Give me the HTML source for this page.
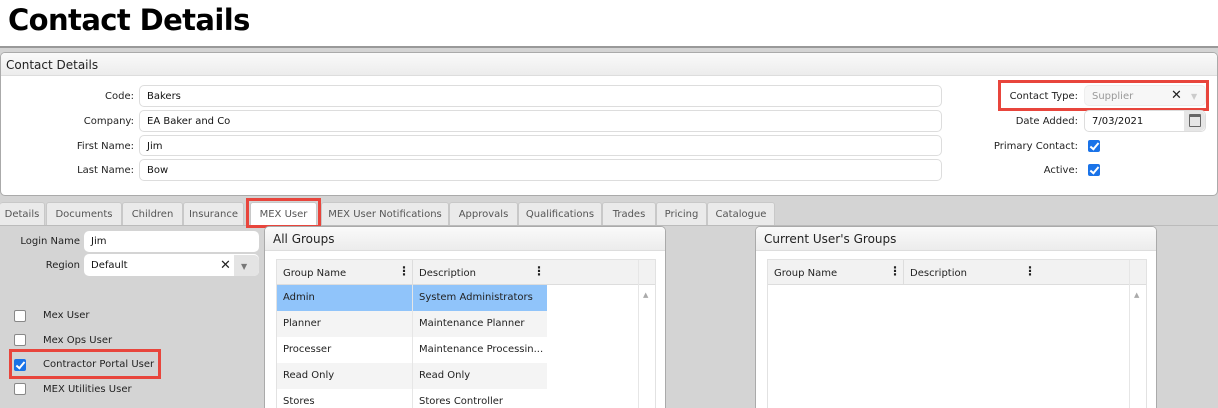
<!DOCTYPE html>
<html><head><style>
*{box-sizing:border-box;margin:0;padding:0}
html,body{width:1218px;height:408px;overflow:hidden}
body{background:#fff;font-family:"DejaVu Sans","Liberation Sans",sans-serif;font-size:10px;color:#222;position:relative}
.a{position:absolute}
.lbl{position:absolute;text-align:right;font-size:10px;color:#222}
.inp{position:absolute;background:#fff;border:1px solid #ddd;border-radius:5px;font-size:10px;padding-left:7px;line-height:21px;color:#111}
.tab{position:absolute;top:202px;height:23px;line-height:23px;background:#eaeaea;border:1px solid #c8c8c8;border-bottom:none;font-size:10px;color:#555;text-align:center;border-radius:3px 3px 0 0}
.cb{position:absolute;width:12px;height:12px;border:1px solid #888;border-radius:2px;background:#fff}
.cbc{position:absolute;width:12px;height:12px;border-radius:2px;background:#1a73e8}
.cbc:after{content:"";position:absolute;left:4px;top:1px;width:3px;height:7px;border:solid #fff;border-width:0 2px 2px 0;transform:rotate(40deg)}
.red{position:absolute;border:3px solid #e8453c}
.panel{position:absolute;background:#fff;border:1px solid #aaa;border-radius:5px 5px 0 0;overflow:hidden}
.ph{height:24px;background:linear-gradient(#fafafa,#ececec);border-bottom:1px solid #ddd;font-size:12px;line-height:24px;padding-left:8px;color:#222}
.row{position:absolute;height:26px;line-height:26px;font-size:10px;padding-left:6px}
</style></head><body>
<div class="a" style="left:8px;top:3px;font-family:'DejaVu Sans',sans-serif;font-weight:bold;font-size:29px;letter-spacing:-0.6px;color:#000">Contact Details</div>
<div class="a" style="left:0;top:46px;width:1218px;height:2px;background:#999"></div>
<div class="a" style="left:0;top:48px;width:1218px;height:360px;background:#d4d4d4"></div>
<div class="panel" style="left:0;top:52px;width:1218px;height:144px;border-radius:5px">
<div class="ph" style="height:23px;line-height:24px;padding-left:5px">Contact Details</div></div>
<div class="lbl" style="left:0;width:134px;top:91px">Code:</div>
<div class="lbl" style="left:0;width:134px;top:116px">Company:</div>
<div class="lbl" style="left:0;width:134px;top:141px">First Name:</div>
<div class="lbl" style="left:0;width:134px;top:165px">Last Name:</div>
<div class="inp" style="left:139px;top:85px;width:803px;height:22px">Bakers</div>
<div class="inp" style="left:139px;top:110px;width:803px;height:22px">EA Baker and Co</div>
<div class="inp" style="left:139px;top:135px;width:803px;height:21px">Jim</div>
<div class="inp" style="left:139px;top:159px;width:803px;height:22px">Bow</div>
<div class="lbl" style="left:900px;width:178px;top:91px">Contact Type:</div>
<div class="inp" style="left:1084px;top:85px;width:122px;height:21px;background:#f7f7f7;border-color:#eee;color:#999">Supplier</div>
<div class="a" style="left:1171px;top:88px;font-size:13px;font-weight:bold;color:#222">✕</div>
<div class="a" style="left:1191px;top:92px;font-size:8px;color:#ccc">▼</div>
<div class="red" style="left:998px;top:80px;width:211px;height:31px"></div>
<div class="lbl" style="left:900px;width:178px;top:116px">Date Added:</div>
<div class="inp" style="left:1084px;top:110px;width:122px;height:22px">7/03/2021</div>
<div class="a" style="left:1184px;top:111px;width:21px;height:20px;background:#e6e6e6;border-radius:0 5px 5px 0"></div>
<div class="a" style="left:1189px;top:114px;width:12px;height:13px;border:1.5px solid #666;border-top-width:3px;border-radius:1px"></div>
<div class="lbl" style="left:900px;width:178px;top:141px">Primary Contact:</div>
<div class="cbc" style="left:1088px;top:140px"></div>
<div class="lbl" style="left:900px;width:178px;top:165px">Active:</div>
<div class="cbc" style="left:1088px;top:164px"></div>

<div class="a" style="left:0;top:225px;width:1218px;height:1px;background:#bbb"></div>
<div class="tab" style="left:0;width:45px;border-left:none">Details</div>
<div class="tab" style="left:46px;width:76px">Documents</div>
<div class="tab" style="left:122px;width:61px">Children</div>
<div class="tab" style="left:183px;width:61px">Insurance</div>
<div class="tab" style="left:250px;width:67px;background:#fff;height:24px">MEX User</div>
<div class="red" style="left:246px;top:198px;width:75px;height:30px"></div>
<div class="tab" style="left:321px;width:128px">MEX User Notifications</div>
<div class="tab" style="left:449px;width:69px">Approvals</div>
<div class="tab" style="left:518px;width:84px">Qualifications</div>
<div class="tab" style="left:602px;width:54px">Trades</div>
<div class="tab" style="left:656px;width:51px">Pricing</div>
<div class="tab" style="left:707px;width:68px">Catalogue</div>

<div class="lbl" style="left:0;width:80px;top:236px">Login Name</div>
<div class="inp" style="left:84px;top:231px;width:175px;height:21px;border:none">Jim</div>
<div class="lbl" style="left:0;width:80px;top:260px">Region</div>
<div class="inp" style="left:84px;top:254px;width:175px;height:22px;border:none;line-height:23px">Default</div>
<div class="a" style="left:234px;top:255px;width:25px;height:21px;background:#e4e4e4;border-radius:0 5px 5px 0"></div>
<div class="a" style="left:220px;top:258px;font-size:13px;font-weight:bold">✕</div>
<div class="a" style="left:241px;top:262px;font-size:8px;color:#777">▼</div>
<div class="cb" style="left:14px;top:310px"></div><div class="a" style="left:43px;top:310px">Mex User</div>
<div class="cb" style="left:14px;top:334px"></div><div class="a" style="left:43px;top:335px">Mex Ops User</div>
<div class="cbc" style="left:14px;top:359px"></div><div class="a" style="left:43px;top:359px">Contractor Portal User</div>
<div class="red" style="left:9px;top:349px;width:152px;height:30px"></div>
<div class="cb" style="left:14px;top:383px"></div><div class="a" style="left:43px;top:384px">MEX Utilities User</div>

<div class="panel" style="left:264px;top:226px;width:402px;height:182px;border-bottom:none"><div class="ph">All Groups</div></div>
<div class="a" style="left:276px;top:259px;width:380px;height:149px;background:#fff;border:1px solid #e2e2e2;border-bottom:none"></div>
<div class="a" style="left:277px;top:260px;width:378px;height:25px;background:#f2f2f2;border-bottom:1px solid #ddd"></div>
<div class="a" style="left:412px;top:260px;width:1px;height:25px;background:#ddd"></div>
<div class="a" style="left:638px;top:260px;width:1px;height:148px;background:#e6e6e6"></div>
<div class="a" style="left:283px;top:268px">Group Name</div><div class="a" style="left:398px;top:264px;font-weight:bold;font-size:12px">⋮</div>
<div class="a" style="left:419px;top:268px">Description</div><div class="a" style="left:533px;top:264px;font-weight:bold;font-size:12px">⋮</div>
<div class="a" style="left:643px;top:291px;font-size:7px;color:#aaa">▲</div>
<div class="row" style="left:277px;top:285px;width:135px;background:#90c4fa">Admin</div>
<div class="row" style="left:413px;top:285px;width:134px;background:#90c4fa">System Administrators</div>
<div class="row" style="left:277px;top:311px;width:270px;background:#f4f4f4">Planner</div><div class="row" style="left:413px;top:311px;width:134px">Maintenance Planner</div>
<div class="row" style="left:277px;top:337px">Processer</div><div class="row" style="left:413px;top:337px">Maintenance Processin...</div>
<div class="row" style="left:277px;top:363px;width:270px;background:#f4f4f4">Read Only</div><div class="row" style="left:413px;top:363px">Read Only</div>
<div class="row" style="left:277px;top:389px">Stores</div><div class="row" style="left:413px;top:389px">Stores Controller</div>
<div class="a" style="left:412px;top:285px;width:1px;height:123px;background:#e6e6e6"></div>

<div class="panel" style="left:755px;top:226px;width:402px;height:182px;border-bottom:none"><div class="ph">Current User's Groups</div></div>
<div class="a" style="left:767px;top:259px;width:380px;height:149px;background:#fff;border:1px solid #e2e2e2;border-bottom:none"></div>
<div class="a" style="left:768px;top:260px;width:378px;height:25px;background:#f2f2f2;border-bottom:1px solid #ddd"></div>
<div class="a" style="left:903px;top:260px;width:1px;height:25px;background:#ddd"></div>
<div class="a" style="left:1129px;top:260px;width:1px;height:148px;background:#e6e6e6"></div>
<div class="a" style="left:774px;top:268px">Group Name</div><div class="a" style="left:889px;top:264px;font-weight:bold;font-size:12px">⋮</div>
<div class="a" style="left:910px;top:268px">Description</div><div class="a" style="left:1024px;top:264px;font-weight:bold;font-size:12px">⋮</div>
<div class="a" style="left:1134px;top:291px;font-size:7px;color:#aaa">▲</div>
</body></html>
